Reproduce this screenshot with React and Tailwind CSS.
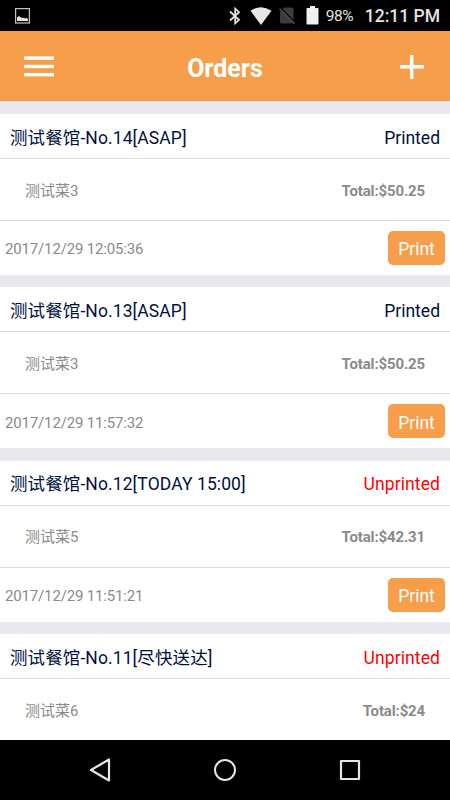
const orders = [
  { id: 14, slot: 'ASAP', printed: true, dish: '测试菜3', total: '$50.25', time: '2017/12/29 12:05:36' },
  { id: 13, slot: 'ASAP', printed: true, dish: '测试菜3', total: '$50.25', time: '2017/12/29 11:57:32' },
  { id: 12, slot: 'TODAY 15:00', printed: false, dish: '测试菜5', total: '$42.31', time: '2017/12/29 11:51:21' },
  { id: 11, slot: '尽快送达', printed: false, dish: '测试菜6', total: '$24' },
];

const StatusBar = () => (
  <div className="flex h-[31px] shrink-0 items-center bg-black pr-[10px] pl-[15px] text-[#e4e4e4]">
    <svg width="15" height="16" viewBox="0 0 15 16" className="mt-px">
      <rect x="0.6" y="0.6" width="13.8" height="14.4" fill="none" stroke="#c4c4c4" strokeWidth="1.2" />
      <path d="M2 13V9.500l2-1.500 2 1.500 1.500.5L9 9.500l1 1 1.500-.5L13 11v2z" fill="#e4e4e4" />
    </svg>
    <div className="ml-auto flex items-center">
      {/* Bluetooth */}
      <svg width="12" height="18" viewBox="0 0 12 18" className="mt-px" fill="none" stroke="#e0e0e0" strokeWidth="1.8">
        <path d="M1 4.5l9 8.3-3.8 3.5V1.7L10 5.2 1 13.5" />
      </svg>
      {/* Wifi */}
      <svg width="22" height="18" viewBox="0 0 22 18" className="ml-[9px]">
        <path d="M.5 3.8Q11-3.4 21.5 3.8L11 18z" fill="#e8e8e8" />
      </svg>
      {/* No SIM */}
      <svg width="16" height="18" viewBox="0 0 16 18" className="ml-[7px]">
        <path d="M5 .5h8q1.5 0 1.5 1.5v14.5H2q-1 0-1-1V4.500z" fill="#3c3c3c" />
        <path d="M1 .5L16.5 16" stroke="#000" strokeWidth="1.5" />
        <path d="M.5 1.5L16 17" stroke="#4c4c4c" strokeWidth="1.5" />
      </svg>
      {/* Battery */}
      <svg width="13" height="19" viewBox="0 0 13 19" className="ml-[11px]">
        <path d="M4 0h5v2h2.5q1 0 1 1v14.5q0 1-1 1h-10q-1 0-1-1V3q0-1 1-1H4z" fill="#f0f0f0" />
      </svg>
      <span className="mt-[2px] ml-[7px] w-[39px] text-[15.5px] leading-[31px] tracking-[-0.5px]">98%</span>
      <span className="mt-[2px] text-[17.5px] leading-[31px] font-medium whitespace-nowrap">12:11 PM</span>
    </div>
  </div>
);

const Header = () => (
  <header className="flex h-[70px] shrink-0 items-center justify-between bg-[#f69e49] pr-[26px] pl-6 text-white">
    <button className="pt-[2px]" aria-label="Menu">
      <svg width="30" height="22" viewBox="0 0 30 22" fill="#fff">
        <rect y="0.4" width="30" height="3.4" />
        <rect y="8.8" width="30" height="3.4" />
        <rect y="17" width="30" height="3.4" />
      </svg>
    </button>
    <h1 className="pt-[5px] pr-1 text-[25px] leading-8 font-bold">Orders</h1>
    <button className="pt-[2px]" aria-label="Add order">
      <svg width="24" height="24" viewBox="0 0 24 24" stroke="#fff" strokeWidth="3.4">
        <path d="M11.7 0v24M0 11.7h24" />
      </svg>
    </button>
  </header>
);

const OrderCard = ({ order }) => (
  <section className="flex shrink-0 flex-col bg-white">
    <div className="flex h-[45px] items-center justify-between border-b border-[#dcdcdc] px-[10px] pt-[3.5px] text-[17.5px] text-[#00113f]">
      <span className="tracking-[0.1px]">测试餐馆-No.{order.id}[{order.slot}]</span>
      <span className={order.printed ? '' : 'tracking-[0.1px] text-[#ff0000]'}>{order.printed ? 'Printed' : 'Unprinted'}</span>
    </div>
    <div className="flex h-[62px] items-center justify-between border-b border-[#dcdcdc] px-[25px] pt-[3px] text-[15px] text-[#8a8a8a]">
      <span>{order.dish}</span>
      <span className="font-bold tracking-[-0.15px]">Total:{order.total}</span>
    </div>
    {order.time && (
      <div className="flex h-[54px] items-center justify-between px-[5px] text-[15px] text-[#8a8a8a]">
        <span className="pt-[3px] tracking-[-0.16px]">{order.time}</span>
        <button className="h-[34px] w-[57px] rounded-[5px] bg-[#f69e49] pt-[3px] text-[17.5px] text-white">Print</button>
      </div>
    )}
  </section>
);

const NavBar = () => (
  <nav className="flex h-[60px] shrink-0 items-center justify-center gap-[103px] bg-black">
    <svg width="22" height="26" viewBox="0 0 22 26" fill="none" stroke="#e6e6e6" strokeWidth="2.2" strokeLinejoin="round">
      <path d="M20 2.5v21L2 13z" />
    </svg>
    <svg width="22" height="22" viewBox="0 0 22 22" fill="none" stroke="#e6e6e6" strokeWidth="2">
      <circle cx="11" cy="11" r="10" />
    </svg>
    <svg width="22" height="22" viewBox="0 0 22 22" fill="none" stroke="#e6e6e6" strokeWidth="2.2" strokeLinejoin="round">
      <rect x="2" y="2" width="18" height="18" />
    </svg>
  </nav>
);

const App = () => {
  return (
    <div className="flex h-[800px] w-[450px] flex-col overflow-hidden bg-[#e8e8ee] font-['Roboto','Noto_Sans_CJK_SC',sans-serif]">
      <StatusBar />
      <Header />
      <main className="flex min-h-0 flex-1 flex-col gap-[12.33px] overflow-hidden pt-[13px]">
        {orders.map((order) => (
          <OrderCard key={order.id} order={order} />
        ))}
      </main>
      <NavBar />
    </div>
  );
};

export default App;
